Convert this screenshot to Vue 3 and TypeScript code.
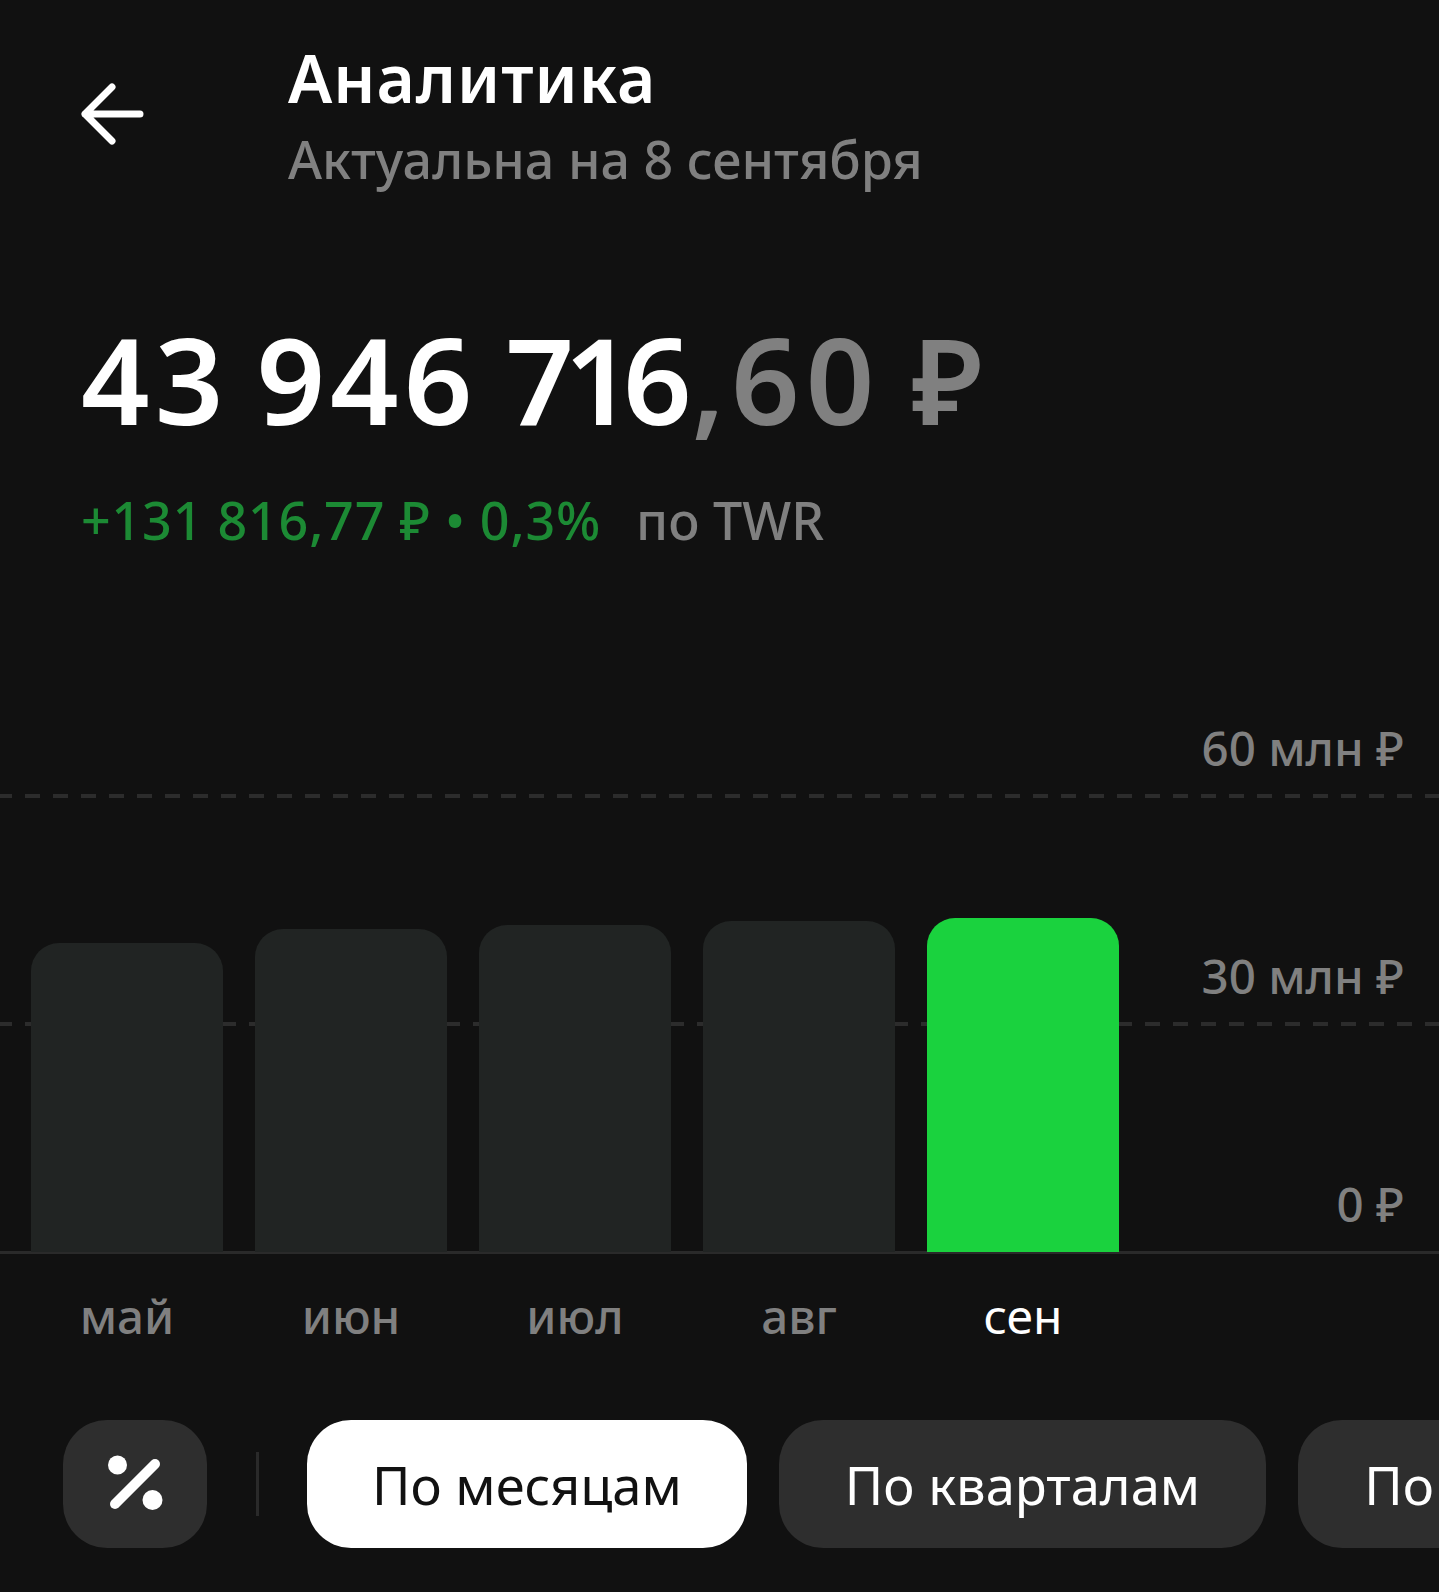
<script setup lang="ts">
interface Bar {
  month: string;
  height: number;
  active?: boolean;
}

const bars: Bar[] = [
  { month: "май", height: 309 },
  { month: "июн", height: 323 },
  { month: "июл", height: 327 },
  { month: "авг", height: 331 },
  { month: "сен", height: 334, active: true },
];

const levels = ["60 млн ₽", "30 млн ₽", "0 ₽"];
</script>

<template>
  <main class="page">
    <header class="header">
      <button class="back" aria-label="Назад">
        <svg width="64" height="62" viewBox="0 0 64 62" fill="none">
          <path d="M31 4 L4 31 L31 58 M4 31 H59" stroke="#fff" stroke-width="7" stroke-linecap="round" stroke-linejoin="round" />
        </svg>
      </button>
      <div class="titles">
        <h1 class="title">Аналитика</h1>
        <p class="subtitle">Актуальна на 8 сентября</p>
      </div>
    </header>

    <section class="summary">
      <div class="amount">43 946 <span class="tight">71</span>6<span class="muted">,60 ₽</span></div>
      <div class="delta">
        <span class="gain">+131 816,77 ₽ • 0,3%</span>
        <span class="twr">по TWR</span>
      </div>
    </section>

    <section class="chart">
      <div class="levels">
        <div v-for="(level, i) in levels" :key="level" class="level" :class="{ solid: i === 2 }">
          <span>{{ level }}</span>
        </div>
      </div>
      <div class="bars">
        <div v-for="bar in bars" :key="bar.month" class="bar" :class="{ active: bar.active }" :style="{ height: bar.height + 'px' }"></div>
      </div>
    </section>

    <div class="months">
      <span v-for="bar in bars" :key="bar.month" class="month" :class="{ active: bar.active }">{{ bar.month }}</span>
    </div>

    <nav class="filters">
      <button class="pill icon" aria-label="Проценты">
        <svg width="60" height="60" viewBox="0 0 60 60" fill="none">
          <circle cx="12.5" cy="11" r="9.5" fill="#fff" />
          <circle cx="47.5" cy="46" r="10" fill="#fff" />
          <path d="M50 10 L10 50" stroke="#fff" stroke-width="10" stroke-linecap="round" />
        </svg>
      </button>
      <span class="divider"></span>
      <button class="pill selected">По месяцам</button>
      <button class="pill">По кварталам</button>
      <button class="pill">По годам</button>
    </nav>
  </main>
</template>

<style scoped>
.page {
  box-sizing: border-box;
  width: 1439px;
  height: 1592px;
  overflow: hidden;
  background: #111111;
  color: #fff;
  font-family: "Noto Sans", "Open Sans", sans-serif;
}
.header {
  display: flex;
  padding: 38px 0 0 81px;
}
.back {
  flex: none;
  margin-top: 45px;
  margin-right: 143px;
  border: none;
  background: none;
  padding: 0;
  height: 62px;
}
.title {
  margin: 0;
  font-size: 66px;
  font-weight: 600;
  line-height: 78px;
  letter-spacing: 1px;
}
.subtitle {
  margin: 10px 0 0;
  color: #808080;
  font-size: 52px;
  font-weight: 500;
  line-height: 66px;
}
.summary {
  padding: 117px 0 0 81px;
}
.amount {
  font-size: 120px;
  font-weight: 600;
  line-height: 140px;
  letter-spacing: 5px;
  word-spacing: -8px;
  white-space: nowrap;
}
.tight {
  letter-spacing: -10px;
}
.muted {
  margin-left: -5px;
  color: #808080;
  letter-spacing: 6px;
  word-spacing: -6px;
}
.delta {
  display: flex;
  gap: 35px;
  margin-top: 38px;
  font-size: 52px;
  font-weight: 500;
  line-height: 66px;
}
.gain {
  color: #1c8a34;
  letter-spacing: 0.8px;
}
.twr {
  color: #808080;
}
.chart {
  position: relative;
  margin-top: 17px;
}
.level {
  display: flex;
  justify-content: flex-end;
  align-items: flex-end;
  box-sizing: border-box;
  background: linear-gradient(to right, #2c2c2c 15px, transparent 15px) 25px 100% / 28px 4px repeat-x;
  padding-right: 35px;
  padding-bottom: 19px;
  height: 228px;
  color: #808080;
  font-size: 47.5px;
  font-weight: 500;
  line-height: 62px;
}
.level.solid {
  background: linear-gradient(#2a2a2a, #2a2a2a) 0 100% / 100% 3px no-repeat;
}
.bars {
  display: flex;
  position: absolute;
  bottom: 2px;
  left: 31px;
  align-items: flex-end;
  gap: 32px;
}
.bar {
  border-radius: 28px 28px 0 0;
  background: #212423;
  width: 192px;
}
.bar.active {
  background: #1ad23e;
}
.months {
  display: flex;
  gap: 32px;
  margin-top: 31px;
  padding-left: 31px;
}
.month {
  width: 192px;
  color: #808080;
  font-size: 47.5px;
  font-weight: 500;
  line-height: 62px;
  text-align: center;
}
.month.active {
  color: #fff;
  font-weight: 400;
  font-size: 48px;
}
.filters {
  display: flex;
  align-items: center;
  gap: 32px;
  margin-top: 73px;
  padding-left: 63px;
  white-space: nowrap;
}
.pill {
  flex: none;
  border: none;
  border-radius: 44px;
  background: #2e2e2e;
  padding: 0 66px;
  height: 128px;
  color: #fff;
  font-family: inherit;
  font-size: 52.5px;
}
.pill.icon {
  display: flex;
  justify-content: center;
  align-items: center;
  padding: 0;
  width: 144px;
}
.pill.selected {
  background: #fff;
  padding: 0 65px;
  color: #111;
}
.divider {
  flex: none;
  margin: 0 16px 0 17px;
  background: #2a2a2a;
  width: 3px;
  height: 64px;
}
</style>

<style>
body {
  background: #111111;
}
</style>
